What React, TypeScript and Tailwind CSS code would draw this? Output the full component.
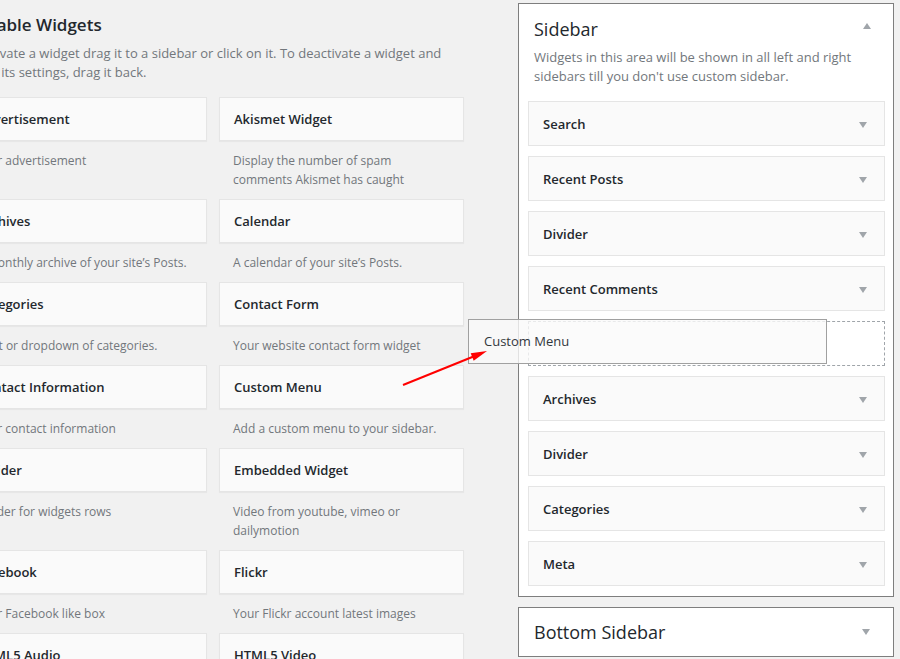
import React from "react";

const leftWidgets: [string, string][] = [
  ["Advertisement", "Your advertisement"],
  ["Akismet Widget", "Display the number of spam comments Akismet has caught"],
  ["Archives", "A monthly archive of your site\u2019s Posts."],
  ["Calendar", "A calendar of your site\u2019s Posts."],
  ["Categories", "A list or dropdown of categories."],
  ["Contact Form", "Your website contact form widget"],
  ["Contact Information", "Your contact information"],
  ["Custom Menu", "Add a custom menu to your sidebar."],
  ["Divider", "Divider for widgets rows"],
  ["Embedded Widget", "Video from youtube, vimeo or dailymotion"],
  ["Facebook", "Your Facebook like box"],
  ["Flickr", "Your Flickr account latest images"],
  ["HTML5 Audio", "Play audio files"],
  ["HTML5 Video", "Play video files"],
];

const sidebarItems = [
  "Search",
  "Recent Posts",
  "Divider",
  "Recent Comments",
  "__placeholder__",
  "Archives",
  "Divider",
  "Categories",
  "Meta",
];

function Down() {
  return (
    <svg width="8" height="6" viewBox="0 0 8 6" className="shrink-0">
      <polygon points="0,0 8,0 4,6" fill="#a0a5aa" />
    </svg>
  );
}

function Up() {
  return (
    <svg width="8" height="6" viewBox="0 0 8 6" className="shrink-0">
      <polygon points="0,6 8,6 4,0" fill="#a0a5aa" />
    </svg>
  );
}

export default function App() {
  return (
    <div
      className="relative flex w-[900px] h-[659px] overflow-hidden bg-[#f1f1f1] text-[#23282d]"
      style={{ fontFamily: '"Open Sans", "Noto Sans", sans-serif' }}
    >
      {/* Left: available widgets */}
      <div className="-ml-[40px] w-[558px] shrink-0 pt-[12px]">
        <h2 className="-ml-[3px] text-[17px] leading-[26px] font-semibold whitespace-nowrap">
          Available Widgets
        </h2>
        <p className="mt-[6px] text-[13px] leading-[19px] text-[#72777c] w-[500px]">
          To activate a widget drag it to a sidebar or click on it. To deactivate a widget and delete its settings, drag it back.
        </p>
        <div className="mt-[15px] ml-[2px] grid grid-cols-[245px_245px] gap-x-[12px] items-start">
          {leftWidgets.map(([title, desc], i) => (
            <div key={i}>
              <div className="h-[44px] border border-[#e5e5e5] bg-[#fafafa] px-[14px] pt-[2px] flex items-center shadow-[0_1px_1px_rgba(0,0,0,0.04)]">
                <span className="text-[13px] font-semibold whitespace-nowrap">{title}</span>
              </div>
              <p className="pt-[10px] pb-[10px] pl-[14px] pr-[20px] text-[12px] leading-[19px] text-[#72777c]">
                {desc}
              </p>
            </div>
          ))}
        </div>
      </div>

      {/* Right: sidebars */}
      <div className="w-[376px] shrink-0 pt-[3px] flex flex-col gap-[10px]">
        <div className="border border-[#7e7e7e] bg-white pl-[9px] pr-[8px] pb-[10px]">
          <div className="flex items-center justify-between pt-[12px] pl-[6px] pr-[14px]">
            <h2 className="text-[18px] leading-[26px] font-normal">Sidebar</h2>
            <div className="-mt-[6px]">
              <Up />
            </div>
          </div>
          <p className="mt-[6px] pl-[6px] text-[13px] leading-[19px] text-[#72777c]">
            Widgets in this area will be shown in all left and right
            <br />
            sidebars till you don't use custom sidebar.
          </p>
          <div className="mt-[15px] flex flex-col gap-[10px]">
            {sidebarItems.map((name, i) =>
              name === "__placeholder__" ? (
                <div key={i} className="h-[45px] border border-dashed border-[#a0a5aa]" />
              ) : (
                <div
                  key={i}
                  className="h-[45px] border border-[#e5e5e5] bg-[#fafafa] pl-[14px] pr-[17px] pt-[2px] flex items-center justify-between"
                >
                  <span className="text-[13px] font-semibold">{name}</span>
                  <Down />
                </div>
              )
            )}
          </div>
        </div>
        <div className="h-[50px] border border-[#7e7e7e] bg-white pl-[15px] pr-[23px] flex items-center justify-between">
          <h2 className="text-[18px] leading-[26px] font-normal">Bottom Sidebar</h2>
          <Down />
        </div>
      </div>

      {/* Drag helper */}
      <div className="absolute left-[468px] top-[319px] w-[359px] h-[45px] border border-[#a0a0a0] bg-[#fafafa]/80 pl-[15px] pt-[1px] flex items-center">
        <span className="text-[13px] text-[#32373c]">Custom Menu</span>
      </div>

      {/* Red arrow */}
      <svg className="absolute left-0 top-0 pointer-events-none" width="900" height="659">
        <line x1="403" y1="385" x2="476" y2="355.5" stroke="#ff0000" strokeWidth="2" />
        <polygon points="487,351 473.7,360.7 470.7,353.3" fill="#ff0000" />
      </svg>
    </div>
  );
}
